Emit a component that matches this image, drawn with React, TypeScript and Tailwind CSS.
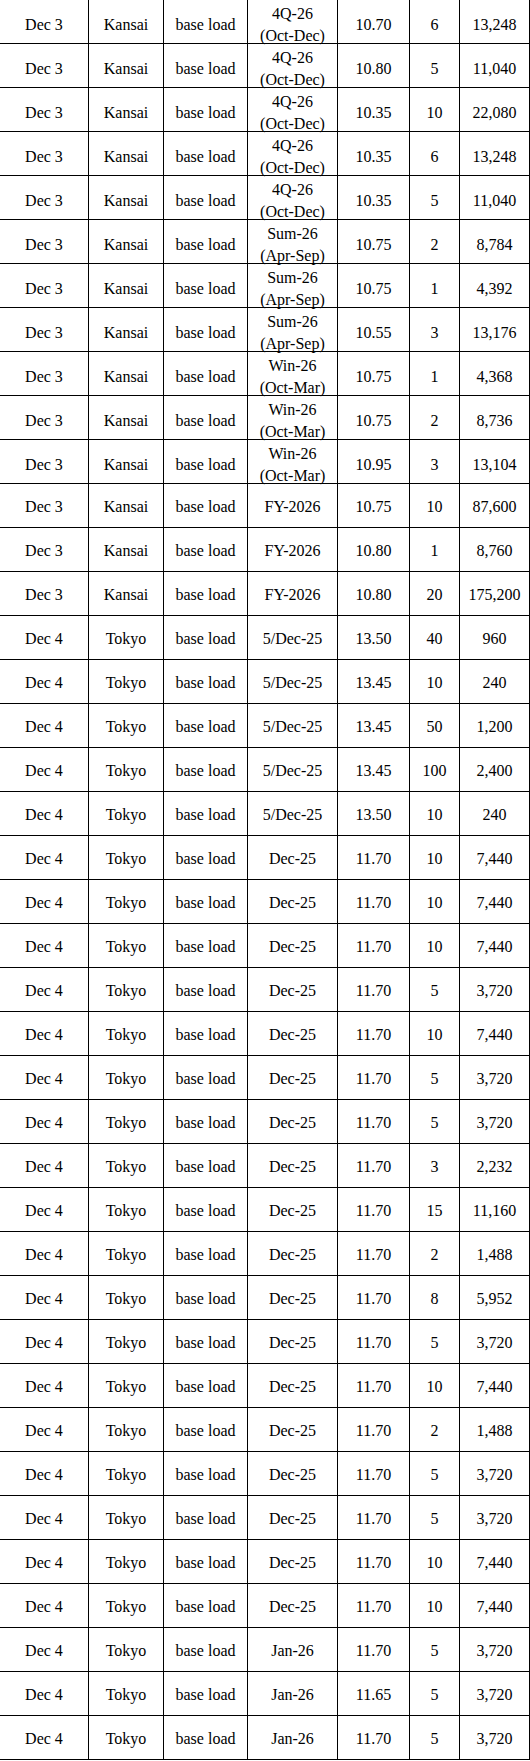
type Row = [string, string, string, string, string, string, string];

const rows: Row[] = [
  ["Dec 3", "Kansai", "base load", "4Q-26\n(Oct-Dec)", "10.70", "6", "13,248"],
  ["Dec 3", "Kansai", "base load", "4Q-26\n(Oct-Dec)", "10.80", "5", "11,040"],
  ["Dec 3", "Kansai", "base load", "4Q-26\n(Oct-Dec)", "10.35", "10", "22,080"],
  ["Dec 3", "Kansai", "base load", "4Q-26\n(Oct-Dec)", "10.35", "6", "13,248"],
  ["Dec 3", "Kansai", "base load", "4Q-26\n(Oct-Dec)", "10.35", "5", "11,040"],
  ["Dec 3", "Kansai", "base load", "Sum-26\n(Apr-Sep)", "10.75", "2", "8,784"],
  ["Dec 3", "Kansai", "base load", "Sum-26\n(Apr-Sep)", "10.75", "1", "4,392"],
  ["Dec 3", "Kansai", "base load", "Sum-26\n(Apr-Sep)", "10.55", "3", "13,176"],
  ["Dec 3", "Kansai", "base load", "Win-26\n(Oct-Mar)", "10.75", "1", "4,368"],
  ["Dec 3", "Kansai", "base load", "Win-26\n(Oct-Mar)", "10.75", "2", "8,736"],
  ["Dec 3", "Kansai", "base load", "Win-26\n(Oct-Mar)", "10.95", "3", "13,104"],
  ["Dec 3", "Kansai", "base load", "FY-2026", "10.75", "10", "87,600"],
  ["Dec 3", "Kansai", "base load", "FY-2026", "10.80", "1", "8,760"],
  ["Dec 3", "Kansai", "base load", "FY-2026", "10.80", "20", "175,200"],
  ["Dec 4", "Tokyo", "base load", "5/Dec-25", "13.50", "40", "960"],
  ["Dec 4", "Tokyo", "base load", "5/Dec-25", "13.45", "10", "240"],
  ["Dec 4", "Tokyo", "base load", "5/Dec-25", "13.45", "50", "1,200"],
  ["Dec 4", "Tokyo", "base load", "5/Dec-25", "13.45", "100", "2,400"],
  ["Dec 4", "Tokyo", "base load", "5/Dec-25", "13.50", "10", "240"],
  ["Dec 4", "Tokyo", "base load", "Dec-25", "11.70", "10", "7,440"],
  ["Dec 4", "Tokyo", "base load", "Dec-25", "11.70", "10", "7,440"],
  ["Dec 4", "Tokyo", "base load", "Dec-25", "11.70", "10", "7,440"],
  ["Dec 4", "Tokyo", "base load", "Dec-25", "11.70", "5", "3,720"],
  ["Dec 4", "Tokyo", "base load", "Dec-25", "11.70", "10", "7,440"],
  ["Dec 4", "Tokyo", "base load", "Dec-25", "11.70", "5", "3,720"],
  ["Dec 4", "Tokyo", "base load", "Dec-25", "11.70", "5", "3,720"],
  ["Dec 4", "Tokyo", "base load", "Dec-25", "11.70", "3", "2,232"],
  ["Dec 4", "Tokyo", "base load", "Dec-25", "11.70", "15", "11,160"],
  ["Dec 4", "Tokyo", "base load", "Dec-25", "11.70", "2", "1,488"],
  ["Dec 4", "Tokyo", "base load", "Dec-25", "11.70", "8", "5,952"],
  ["Dec 4", "Tokyo", "base load", "Dec-25", "11.70", "5", "3,720"],
  ["Dec 4", "Tokyo", "base load", "Dec-25", "11.70", "10", "7,440"],
  ["Dec 4", "Tokyo", "base load", "Dec-25", "11.70", "2", "1,488"],
  ["Dec 4", "Tokyo", "base load", "Dec-25", "11.70", "5", "3,720"],
  ["Dec 4", "Tokyo", "base load", "Dec-25", "11.70", "5", "3,720"],
  ["Dec 4", "Tokyo", "base load", "Dec-25", "11.70", "10", "7,440"],
  ["Dec 4", "Tokyo", "base load", "Dec-25", "11.70", "10", "7,440"],
  ["Dec 4", "Tokyo", "base load", "Jan-26", "11.70", "5", "3,720"],
  ["Dec 4", "Tokyo", "base load", "Jan-26", "11.65", "5", "3,720"],
  ["Dec 4", "Tokyo", "base load", "Jan-26", "11.70", "5", "3,720"],
];

export default function App() {
  return (
    <div className="w-[530px] bg-white font-['Liberation_Serif',serif] text-[16px] leading-[22px] text-black">
      {rows.map((r, i) => (
        <div
          key={i}
          className="grid h-[44px] grid-cols-[89px_75px_84px_90px_72px_50px_70px] border-b border-black"
        >
          {r.map((cell, j) => (
            <div
              key={j}
              className="flex flex-col items-center justify-center border-r border-black pt-[3px] text-center"
            >
              {cell.split("\n").map((line) => (
                <span key={line}>{line}</span>
              ))}
            </div>
          ))}
        </div>
      ))}
    </div>
  );
}
